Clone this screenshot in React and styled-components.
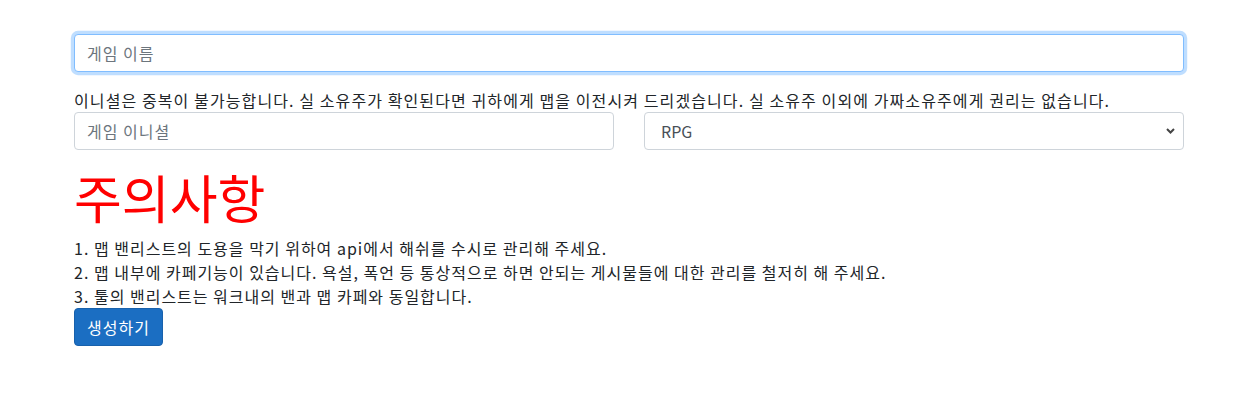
import React from "react";
import styled, { createGlobalStyle } from "styled-components";

const Global = createGlobalStyle`
  html, body { margin: 0; padding: 0; background: #fff; }
  body {
    font-family: "Noto Sans CJK KR", "Noto Sans", "Liberation Sans", sans-serif;
    font-size: 16px;
    line-height: 1.5;
    color: #212529;
  }
  * { box-sizing: border-box; }
`;

const Container = styled.div`
  width: 1110px;
  margin-left: 74px;
  padding-top: 34px;
`;

const FormGroup = styled.div`
  margin-bottom: 16px;
`;

const Input = styled.input`
  display: block;
  width: 100%;
  height: 38px;
  padding: 6px 12px;
  font-family: inherit;
  font-size: 16px;
  line-height: 1.5;
  letter-spacing: 1px;
  color: #495057;
  background: #fff;
  border: 1px solid ${(p) => (p.$focused ? "#80bdff" : "#ced4da")};
  border-radius: 4px;
  outline: none;
  box-shadow: ${(p) => (p.$focused ? "0 0 0 3.2px rgba(0,123,255,.25)" : "none")};
  &::placeholder { color: #6c757d; opacity: 1; }
`;

const Note = styled.div`
  font-size: 16px;
  line-height: 24px;
  letter-spacing: 1.1px;
  white-space: nowrap;
`;

const Row = styled.div`
  display: grid;
  grid-template-columns: 1fr 1fr;
  column-gap: 30px;
  margin-bottom: 16px;
`;

const SelectBox = styled.div`
  height: 38px;
  border: 1px solid #ced4da;
  border-radius: 4px;
  padding: 6px 8px 6px 16px;
  display: flex;
  align-items: center;
  justify-content: space-between;
  color: #495057;
  font-size: 16px;
  background: #fff;
`;

const Heading = styled.h1`
  margin: 0 0 8px;
  font-size: 52px;
  line-height: 1.2;
  font-weight: 400;
  color: red;
`;

const List = styled.div`
  font-size: 16px;
  line-height: 24px;
  letter-spacing: 1px;
`;

const Button = styled.button`
  display: inline-block;
  height: 38px;
  padding: 6px 12px;
  font-family: inherit;
  font-size: 16px;
  line-height: 1.5;
  letter-spacing: 1px;
  color: #fff;
  background: #1b6ec2;
  border: 1px solid #1861ac;
  border-radius: 4px;
`;

export default function App() {
  return (
    <>
      <Global />
      <Container>
        <FormGroup>
          <Input $focused placeholder="게임 이름" />
        </FormGroup>
        <Note>
          이니셜은 중복이 불가능합니다. 실 소유주가 확인된다면 귀하에게 맵을 이전시켜 드리겠습니다. 실 소유주 이외에 가짜소유주에게 권리는 없습니다.
        </Note>
        <Row>
          <Input placeholder="게임 이니셜" />
          <SelectBox>
            <span>RPG</span>
            <svg width="9" height="6" viewBox="0 0 9 6">
              <path d="M1 1L4.5 4.5L8 1" fill="none" stroke="#444" strokeWidth="2" />
            </svg>
          </SelectBox>
        </Row>
        <Heading>주의사항</Heading>
        <List>
          <div>1. 맵 밴리스트의 도용을 막기 위하여 api에서 해쉬를 수시로 관리해 주세요.</div>
          <div>2. 맵 내부에 카페기능이 있습니다. 욕설, 폭언 등 통상적으로 하면 안되는 게시물들에 대한 관리를 철저히 해 주세요.</div>
          <div>3. 툴의 밴리스트는 워크내의 밴과 맵 카페와 동일합니다.</div>
        </List>
        <Button>생성하기</Button>
      </Container>
    </>
  );
}
